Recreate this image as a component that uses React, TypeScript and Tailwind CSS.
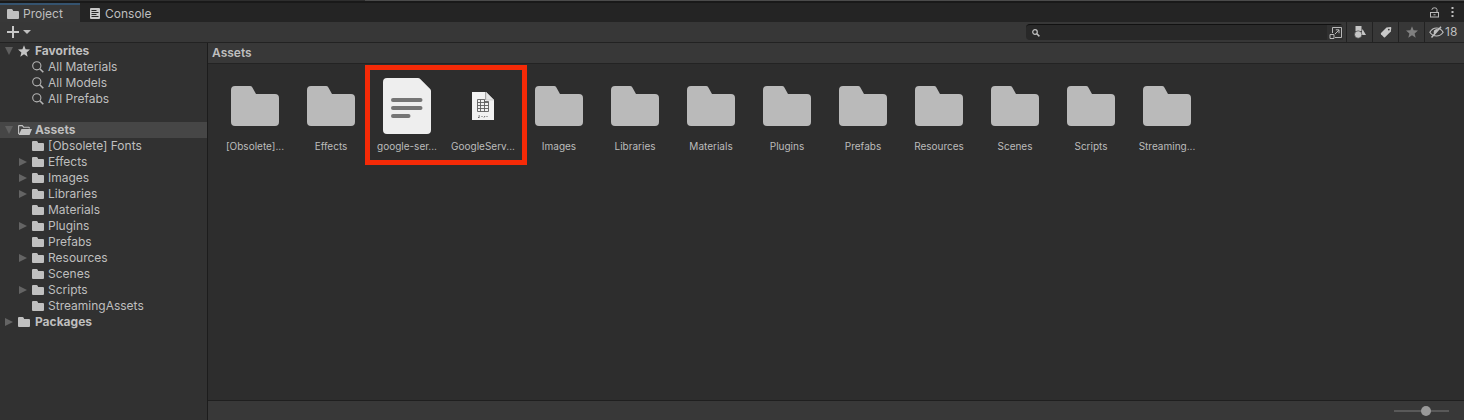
import React, { useState } from "react";

const FolderGlyph = ({ className = "" }: { className?: string }) => (
  <svg viewBox="0 0 12 10" className={`h-2.5 w-3 shrink-0 fill-[#c0c0c0] ${className}`} aria-hidden="true">
    <path d="M1 0h3.6q.6 0 .9.5L6.2 2H11q1 0 1 1v6q0 1-1 1H1Q0 10 0 9V1Q0 0 1 0Z" />
  </svg>
);

const OpenFolderGlyph = () => (
  <svg viewBox="0 0 14 10" className="h-2.5 w-3.5 shrink-0" aria-hidden="true">
    <path d="M.6 9V1.1Q.6.6 1.1.6h3.2l1.3 1.6h5.1q.6 0 .6.6v.8" fill="none" stroke="#c4c4c4" strokeWidth="1.1" />
    <path d="M3.5 4H14l-2.2 5.4q-.3.6-.9.6H.6Z" fill="#c4c4c4" />
  </svg>
);

const StarGlyph = ({ className }: { className: string }) => (
  <svg viewBox="0 0 12 12" className={className} aria-hidden="true">
    <path d="M6 .2 7.6 4.3 12 4.6 8.6 7.4 9.7 11.7 6 9.3 2.3 11.7 3.4 7.4 0 4.6 4.4 4.3Z" />
  </svg>
);

const SearchGlyph = ({ className }: { className: string }) => (
  <svg viewBox="0 0 12 12" className={className} fill="none" stroke="#b4b4b4" aria-hidden="true">
    <circle cx="4.8" cy="4.8" r="4.1" strokeWidth="1.1" />
    <path d="M7.8 7.8 11.3 11.3" strokeWidth="1.6" />
  </svg>
);

const BigFolder = () => (
  <svg viewBox="0 0 48 40" className="h-10 w-12 fill-[#bababa]" aria-hidden="true">
    <path d="M4 0h15q1.6 0 2.4 1.4L25 8h19q4 0 4 4v24q0 4-4 4H4q-4 0-4-4V4q0-4 4-4Z" />
  </svg>
);

const TextFile = () => (
  <svg viewBox="0 0 48 56" className="h-14 w-12" aria-hidden="true">
    <path d="M4 0h31q1.2 0 2 .8L47.2 11q.8.8.8 2v39q0 4-4 4H4q-4 0-4-4V4q0-4 4-4Z" fill="#eeeeee" />
    <path d="M10 22h27.500M10 30h27.500M10 38h15.500" stroke="#757575" strokeWidth="4" strokeLinecap="round" />
  </svg>
);

const PlistFile = () => (
  <svg viewBox="0 0 22 28" className="h-7 w-[22px]" aria-hidden="true">
    <path d="M0 0h14l8 8v20H0Z" fill="#f2f2f2" />
    <path d="M14 0v8h8Z" fill="#e4e4e4" stroke="#b5b5b5" strokeWidth=".5" />
    <path d="M13.500 0v8" stroke="#8b8b8b" strokeWidth=".7" />
    <path d="M5.500 7.500h7v2h4v10h-11ZM5.500 10.500h11M5.500 13.500h11M5.500 16.500h11M8.500 7.500v12M12.500 7.500v12" fill="none" stroke="#5e5e5e" strokeWidth=".9" />
    <path d="M6.500 24h1.500M6 25.500h1.500M9.500 24.500h1M12 25.500l1-1.500M14.500 24.500h1" stroke="#666666" strokeWidth="1" />
  </svg>
);

const Arrow = ({ open }: { open: boolean }) =>
  open ? (
    <svg viewBox="0 0 8 8" className="size-2 shrink-0 fill-[#5f5f5f]" aria-hidden="true">
      <path d="M0 0h8L4 8Z" />
    </svg>
  ) : (
    <svg viewBox="0 0 8 8" className="size-2 shrink-0 fill-[#646464]" aria-hidden="true">
      <path d="M0 0 8 4 0 8Z" />
    </svg>
  );

const folders = [
  { name: "[Obsolete] Fonts", nested: false },
  { name: "Effects", nested: true },
  { name: "Images", nested: true },
  { name: "Libraries", nested: true },
  { name: "Materials", nested: false },
  { name: "Plugins", nested: true },
  { name: "Prefabs", nested: false },
  { name: "Resources", nested: true },
  { name: "Scenes", nested: false },
  { name: "Scripts", nested: true },
  { name: "StreamingAssets", nested: false },
];

const highlighted = [
  { name: "google-ser...", icon: <TextFile /> },
  { name: "GoogleServ...", icon: <PlistFile /> },
];

const rootFolders = ["Images", "Libraries", "Materials", "Plugins", "Prefabs", "Resources", "Scenes", "Scripts", "Streaming..."];

const Tile = ({ name, icon }: { name: string; icon: React.ReactNode }) => (
  <button type="button" className="flex w-19 flex-col items-center">
    <span className="flex h-14 items-center justify-center">{icon}</span>
    <span className="mt-1 text-[10px] leading-4 whitespace-nowrap text-[#bcbcbc]">{name}</span>
  </button>
);

const Heading = ({ open, icon, label, selected = false }: { open: boolean; icon: React.ReactNode; label: string; selected?: boolean }) => (
  <button
    type="button"
    aria-expanded={open}
    className={`flex h-4 w-full items-center pl-[5px] font-bold ${selected ? "bg-[#464646]" : ""}`}
  >
    <Arrow open={open} />
    <span className="ml-[5px] flex w-[17px]">{icon}</span>
    {label}
  </button>
);

const ToolButton = ({ label, children }: { label: string; children: React.ReactNode }) => (
  <button type="button" aria-label={label} className="flex h-full w-[26px] items-center justify-center border-l border-[#222222]">
    {children}
  </button>
);

export default function App() {
  const [query, setQuery] = useState("");
  const [size, setSize] = useState(60);

  return (
    <div className="flex min-h-screen flex-col bg-[#313131] font-['Inter','Liberation_Sans',sans-serif] text-xs leading-4 text-[#bfbfbf]">
      <header className="bg-[#242424]">
        <div className="flex h-px">
          <div className="w-[365px] bg-[#2e2e2e]" />
          <div className="flex-1 bg-[#4b4b4b]" />
        </div>
        <div className="h-0.5 bg-[#191919]" />
        <div className="flex h-[19px] items-stretch">
          <div role="tablist" className="flex flex-1">
            <button type="button" role="tab" aria-selected="true" className="flex w-20 items-center border-t-2 border-[#35536f] bg-[#383838] pl-[7px]">
              <FolderGlyph />
              <span className="ml-1">Project</span>
            </button>
            <button type="button" role="tab" aria-selected="false" className="flex items-center border-t-2 border-transparent pl-2.5">
              <svg viewBox="0 0 10 11" className="h-[11px] w-2.5" aria-hidden="true">
                <rect width="10" height="11" rx="1" fill="#c8c8c8" />
                <path d="M1.500 2.500h5M1.500 4.500h7M1.500 6.500h5M1.500 8.500h7" stroke="#242424" />
              </svg>
              <span className="ml-[5px]">Console</span>
            </button>
          </div>
          <div className="flex items-center gap-3 pr-2.5">
            <button type="button" aria-label="Lock">
              <svg viewBox="0 0 9 11" className="h-[11px] w-[9px]" fill="none" stroke="#b9b9b9" aria-hidden="true">
                <rect x=".5" y="5.500" width="8" height="4.500" />
                <path d="M2 3V2.500Q2 .8 4.500.8T7 2.500v3M3.500 7.800h2" />
              </svg>
            </button>
            <button type="button" aria-label="Menu">
              <svg viewBox="0 0 3 11" className="h-[11px] w-[3px] fill-[#c0c0c0]" aria-hidden="true">
                <path d="M.5 0h2v2h-2ZM.5 4h2v2h-2ZM.5 8h2v2h-2Z" />
              </svg>
            </button>
          </div>
        </div>
      </header>

      <div className="flex h-[21px] items-center justify-between border-b border-[#222222] bg-[#373737]">
        <button type="button" aria-label="Create" className="flex items-center gap-1 pl-[7px]">
          <svg viewBox="0 0 12 12" className="size-3" stroke="#c8c8c8" strokeWidth="2" aria-hidden="true">
            <path d="M6 0v12M0 6h12" />
          </svg>
          <svg viewBox="0 0 8 4" className="h-1 w-2 fill-[#c0c0c0]" aria-hidden="true">
            <path d="M0 0h8L4 4Z" />
          </svg>
        </button>
        <div className="flex h-full items-center">
          <div className="mr-[3px] flex h-4 items-center rounded-sm border-t border-[#111111] bg-[#282828]">
            <label htmlFor="search" aria-label="Search" className="pl-1.5">
              <svg viewBox="0 0 8 8" className="size-2" fill="none" stroke="#c0c0c0" aria-hidden="true">
                <circle cx="3" cy="3" r="2.300" strokeWidth="1.200" />
                <path d="M4.800 4.800 7.400 7.400" strokeWidth="1.500" />
              </svg>
            </label>
            <input
              id="search"
              aria-label="Search"
              value={query}
              onChange={(e) => setQuery(e.target.value)}
              className="h-full w-[287px] bg-transparent px-1 text-[11px] outline-none"
            />
            <button type="button" aria-label="Open in search" className="flex h-full w-4 items-center justify-center bg-[#303030]">
              <svg viewBox="0 0 13 12" className="h-3 w-[13px]" fill="none" stroke="#b8b8b8" aria-hidden="true">
                <path d="M3.500 6V.5h9v10H6M1 7.500h4v4H1ZM6 7l4-4M6.800 2.800H10v3.400" />
              </svg>
            </button>
          </div>
          <ToolButton label="Filter by type">
            <svg viewBox="0 0 12 14" className="h-3.5 w-3 fill-[#c6c6c6]" aria-hidden="true">
              <path d="M1.500 1h6v5h-6ZM8.500 4 12 10H7Z" />
              <circle cx="4.200" cy="9.500" r="3.700" stroke="#373737" strokeWidth=".6" />
            </svg>
          </ToolButton>
          <ToolButton label="Filter by label">
            <svg viewBox="0 0 12 12" className="size-3" aria-hidden="true">
              <path d="M6.500 1.500 10.500 1q.9 0 .8.9L10.800 5.500 5 11.200q-.6.5-1.100 0L1 8.200Q.5 7.600 1 7Z" fill="#c8c8c8" />
              <circle cx="8.800" cy="3.600" r=".9" fill="#373737" />
            </svg>
          </ToolButton>
          <ToolButton label="Save search">
            <StarGlyph className="size-3 fill-[#808080]" />
          </ToolButton>
          <button type="button" aria-label="18 hidden packages" className="flex h-full w-10 items-center border-l border-[#222222] pl-1">
            <svg viewBox="0 0 15 12" className="h-3 w-[15px] shrink-0" fill="none" stroke="#c0c0c0" aria-hidden="true">
              <path d="M.8 6.200Q3.500 2 7.500 2t6.700 4.200Q11.500 10 7.500 10T.8 6.200Z" strokeWidth="1.100" />
              <path d="M5 4.500Q4 7.500 5.500 8.500L9.500 3.500Q7 2 5 4.500Z" fill="#c0c0c0" stroke="none" />
              <path d="M2.500 11.500 12 .8" strokeWidth="1.500" />
            </svg>
            <span className="ml-px">18</span>
          </button>
        </div>
      </div>

      <div className="flex flex-1">
        <nav aria-label="Folders" className="w-52 shrink-0 border-r border-[#1c1c1c]">
          <Heading open icon={<StarGlyph className="size-3 fill-[#c4c4c4]" />} label="Favorites" />
          <ul>
            {["All Materials", "All Models", "All Prefabs"].map((name) => (
              <li key={name}>
                <button type="button" className="flex h-4 w-full items-center gap-1 pl-8">
                  <SearchGlyph className="size-3 shrink-0" />
                  {name}
                </button>
              </li>
            ))}
          </ul>
          <div className="mt-[15px]">
            <Heading open selected icon={<OpenFolderGlyph />} label="Assets" />
          </div>
          <ul>
            {folders.map(({ name, nested }) => (
              <li key={name}>
                <button type="button" className="flex h-4 w-full items-center pl-[19px]">
                  <span className="w-[13px]">{nested && <Arrow open={false} />}</span>
                  <FolderGlyph className="mr-1" />
                  {name}
                </button>
              </li>
            ))}
          </ul>
          <Heading open={false} icon={<FolderGlyph />} label="Packages" />
        </nav>

        <main className="flex min-w-0 flex-1 flex-col bg-[#2d2d2d]">
          <h1 className="h-[21px] border-b border-[#232323] bg-[#383838] pt-0.5 pl-1 font-semibold">Assets</h1>
          <div className="flex flex-1 flex-wrap content-start pt-3.5 pl-[9px]">
            <Tile name="[Obsolete]..." icon={<BigFolder />} />
            <Tile name="Effects" icon={<BigFolder />} />
            <div className="relative flex">
              {highlighted.map((file) => (
                <Tile key={file.name} {...file} />
              ))}
              <div className="pointer-events-none absolute -top-[13px] -right-1.5 -bottom-[11px] -left-1 border-5 border-[#f52a07]" />
            </div>
            {rootFolders.map((name) => (
              <Tile key={name} name={name} icon={<BigFolder />} />
            ))}
          </div>
          <footer className="flex h-5 items-center justify-end border-t border-[#1f1f1f] bg-[#383838] pr-[15px]">
            <input
              type="range"
              aria-label="Icon size"
              value={size}
              onChange={(e) => setSize(Number(e.target.value))}
              className="h-2.5 w-[55px] appearance-none bg-transparent [&::-webkit-slider-runnable-track]:h-0.5 [&::-webkit-slider-runnable-track]:bg-[#595959] [&::-webkit-slider-thumb]:-mt-1 [&::-webkit-slider-thumb]:size-2.5 [&::-webkit-slider-thumb]:appearance-none [&::-webkit-slider-thumb]:rounded-full [&::-webkit-slider-thumb]:bg-[#999999]"
            />
          </footer>
        </main>
      </div>
    </div>
  );
}
